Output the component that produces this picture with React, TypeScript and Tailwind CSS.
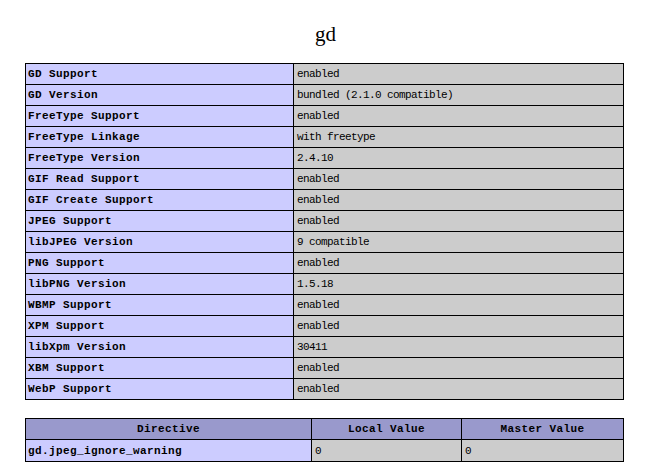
import React from "react";

const rows: [string, string][] = [
  ["GD Support", "enabled"],
  ["GD Version", "bundled (2.1.0 compatible)"],
  ["FreeType Support", "enabled"],
  ["FreeType Linkage", "with freetype"],
  ["FreeType Version", "2.4.10"],
  ["GIF Read Support", "enabled"],
  ["GIF Create Support", "enabled"],
  ["JPEG Support", "enabled"],
  ["libJPEG Version", "9 compatible"],
  ["PNG Support", "enabled"],
  ["libPNG Version", "1.5.18"],
  ["WBMP Support", "enabled"],
  ["XPM Support", "enabled"],
  ["libXpm Version", "30411"],
  ["XBM Support", "enabled"],
  ["WebP Support", "enabled"],
];

const mono = "font-['Liberation_Mono',monospace] text-[11px] leading-[19px] tracking-[-0.6px] text-black";
const monoBold = "font-['Liberation_Mono',monospace] text-[11px] leading-[19px] tracking-[0.4px] font-bold text-black";

export default function App() {
  return (
    <div className="w-[651px] h-[471px] bg-white overflow-hidden">
      <div className="mt-[22px] h-[24px] text-center font-['Liberation_Serif',serif] text-[21px] leading-[24px] text-black">
        gd
      </div>
      <table className="mt-[17px] ml-[25px] w-[599px] border-collapse table-fixed">
        <colgroup>
          <col className="w-[268px]" />
          <col />
        </colgroup>
        <tbody>
          {rows.map(([k, v]) => (
            <tr key={k} className="h-[21px]">
              <td className={`border border-black bg-[#ccccff] px-[2px] pt-[1px] pb-0 align-middle whitespace-nowrap ${monoBold}`}>{k}</td>
              <td className={`border border-black bg-[#cccccc] px-[3px] pt-[1px] pb-0 align-middle whitespace-nowrap ${mono}`}>{v}</td>
            </tr>
          ))}
        </tbody>
      </table>
      <table className="mt-[18px] ml-[25px] w-[599px] border-collapse table-fixed">
        <colgroup>
          <col className="w-[286px]" />
          <col className="w-[150px]" />
          <col />
        </colgroup>
        <tbody>
          <tr className="h-[21px]">
            <th className={`border border-black bg-[#9999cc] pt-[1px] pb-0 text-center ${monoBold}`}>Directive</th>
            <th className={`border border-black bg-[#9999cc] pt-[1px] pb-0 text-center ${monoBold}`}>Local Value</th>
            <th className={`border border-black bg-[#9999cc] pt-[1px] pb-0 text-center ${monoBold}`}>Master Value</th>
          </tr>
          <tr className="h-[22px]">
            <td className={`border border-black bg-[#ccccff] px-[2px] pt-[1px] pb-0 whitespace-nowrap ${monoBold}`}>gd.jpeg_ignore_warning</td>
            <td className={`border border-black bg-[#cccccc] px-[3px] pt-[1px] pb-0 whitespace-nowrap ${mono}`}>0</td>
            <td className={`border border-black bg-[#cccccc] px-[3px] pt-[1px] pb-0 whitespace-nowrap ${mono}`}>0</td>
          </tr>
        </tbody>
      </table>
    </div>
  );
}
